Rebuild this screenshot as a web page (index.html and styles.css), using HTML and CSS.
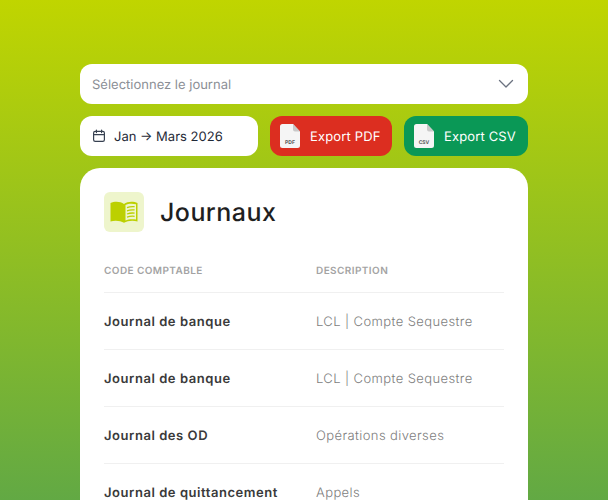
FILE: index.html
```html
<!DOCTYPE html>
<html lang="fr">
<head>
<meta charset="utf-8">
<title>Journaux</title>
<link rel="stylesheet" href="styles.css">
</head>
<body>
<main class="page">
  <div class="select">
    <span class="txt">Sélectionnez le journal</span>
    <svg class="chev" width="16" height="10" viewBox="0 0 16 10" fill="none"><path d="M1.500 1.500l6.500 6.500 6.500-6.500" stroke="#6b7280" stroke-width="1.300" stroke-linecap="round" stroke-linejoin="round"/></svg>
  </div>
  <div class="toolbar">
    <div class="date">
      <svg width="14" height="14" viewBox="0 0 14 14" fill="none" stroke="#374151" stroke-width="1.200" stroke-linecap="round"><rect x="1.600" y="2.400" width="10.800" height="10" rx="1.600"/><path d="M1.600 5.600h10.800M4.400 1v2.600M9.600 1v2.600"/></svg>
      <span class="txt">Jan → Mars 2026</span>
    </div>
    <button class="btn pdf">
      <svg class="file" width="20" height="24" viewBox="0 0 20 24"><path d="M2.500 0H13l7 7.500V21.500a2.500 2.500 0 0 1-2.500 2.500h-15A2.500 2.500 0 0 1 0 21.500v-19A2.500 2.500 0 0 1 2.500 0z" fill="#f5f5f5"/><path d="M13 0l7 7.500h-5a2 2 0 0 1-2-2z" fill="#c9c9c9"/><text x="10" y="19.500" text-anchor="middle" class="ftext">PDF</text></svg>
      <span class="txt">Export PDF</span>
    </button>
    <button class="btn csv">
      <svg class="file" width="20" height="24" viewBox="0 0 20 24"><path d="M2.500 0H13l7 7.500V21.500a2.500 2.500 0 0 1-2.500 2.500h-15A2.500 2.500 0 0 1 0 21.500v-19A2.500 2.500 0 0 1 2.500 0z" fill="#f5f5f5"/><path d="M13 0l7 7.500h-5a2 2 0 0 1-2-2z" fill="#c9c9c9"/><text x="10" y="19.500" text-anchor="middle" class="ftext">CSV</text></svg>
      <span class="txt">Export CSV</span>
    </button>
  </div>
  <section class="card">
    <header class="head">
      <div class="badge">
        <svg width="28" height="22" viewBox="0 0 28 22"><path d="M0.500 2C4.500 0.300 10.500 0.300 14 3C17.500 0.300 23.500 0.300 27.500 2V20.500C23.500 19.200 17.500 19.500 14 21.800C10.500 19.500 4.500 19.200 0.500 20.500z" fill="#bcd000"/><path d="M15.500 4C18 2.500 22.500 2.300 26 3.200V18.600C22.500 17.900 18 18.200 15.500 19.500z" fill="#eef5cc"/><path d="M17 6.600C19.500 5.600 22 5.400 24.600 5.700M17 9.800C19.500 8.800 22 8.600 24.600 8.900M17 13C19.500 12 22 11.800 24.600 12.100M17 16.200C19.500 15.200 22 15 24.600 15.300" fill="none" stroke="#bcd000" stroke-width="1.300"/></svg>
      </div>
      <h1 class="txt">Journaux</h1>
    </header>
    <div class="row labels"><span>CODE COMPTABLE</span><span>DESCRIPTION</span></div>
    <div class="row"><strong class="txt">Journal de banque</strong><span class="txt">LCL | Compte Sequestre</span></div>
    <div class="row"><strong class="txt">Journal de banque</strong><span class="txt">LCL | Compte Sequestre</span></div>
    <div class="row"><strong class="txt">Journal des OD</strong><span class="txt">Opérations diverses</span></div>
    <div class="row"><strong class="txt">Journal de quittancement</strong><span class="txt">Appels</span></div>
  </section>
</main>
</body>
</html>
```
FILE: styles.css
```css
* { box-sizing: border-box; }
html, body { margin: 0; height: 500px; overflow: hidden; }
body {
  background: linear-gradient(180deg, #c0d500 0%, #62a944 100%);
  font-family: Inter, sans-serif;
  text-rendering: geometricPrecision;
}
.page { padding: 64px 80px 0; display: flex; flex-direction: column; gap: 12px; }
.txt { padding-top: 2px; }
.select {
  height: 40px; background: #fff; border-radius: 12px;
  display: flex; align-items: center; justify-content: space-between;
  padding: 0 14px 0 12px; font-size: 13px; color: #8b8f96;
}
.toolbar { display: flex; gap: 12px; }
.date {
  width: 178px; height: 40px; background: #fff; border-radius: 12px;
  display: flex; align-items: center; gap: 8px; padding-left: 12px;
  font-size: 13px; font-weight: 400; color: #1f2937;
}
.btn {
  height: 40px; border: 0; border-radius: 12px; color: #fff;
  font: 400 13px Inter, sans-serif; letter-spacing: .15px;
  text-rendering: geometricPrecision;
  display: flex; align-items: center; padding: 0 0 0 10px; gap: 10px;
}
.pdf { width: 122px; background: #dc2e20; }
.csv { width: 124px; background: #0a9856; }
.ftext { font: 700 5px Inter, sans-serif; fill: #555; letter-spacing: 0; }
.card {
  background: #fff; border-radius: 20px 20px 0 0; height: 340px;
  padding: 24px 24px 0;
  font-family: Inter, sans-serif;
}
.head { display: flex; align-items: center; gap: 16px; margin-bottom: 18px; }
.badge {
  width: 40px; height: 40px; border-radius: 6px; background: #eef5cc;
  display: flex; align-items: center; justify-content: center;
}
h1 { margin: 0; font: 500 25px Inter, sans-serif; color: #1f1f1f; letter-spacing: .45px; }
.row {
  display: grid; grid-template-columns: 212px 1fr; align-items: center;
  height: 57px; border-top: 1px solid #f0f0f0;
  font-size: 13px; font-weight: 300; letter-spacing: .4px; color: #7d7d7d;
}
.row strong { font-weight: 600; color: #3a3a3a; letter-spacing: .55px; }
.labels { border-top: 0; height: 42px; font-size: 10px; font-weight: 600; letter-spacing: .42px; color: #a3a3a3; }
```
